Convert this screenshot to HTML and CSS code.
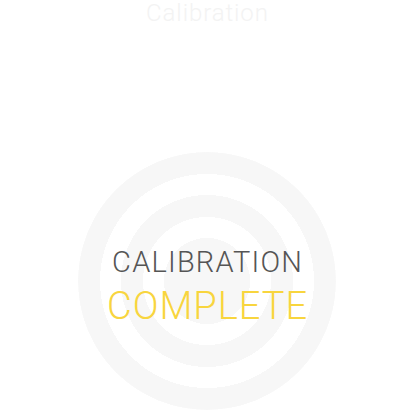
FILE: index.html
```html
<!DOCTYPE html>
<html>
<head>
<meta charset="utf-8">
<link rel="stylesheet" href="styles.css">
</head>
<body>
<div class="screen">
  <h1 class="title">Calibration</h1>
  <div class="target">
    <div class="status">
      <span class="line1">CALIBRATION</span>
      <span class="line2">COMPLETE</span>
    </div>
  </div>
</div>
</body>
</html>
```
FILE: styles.css
```css
html, body {
  margin: 0;
  padding: 0;
  background: #ffffff;
}
.screen {
  width: 414px;
  height: 419px;
  display: flex;
  flex-direction: column;
  align-items: center;
  font-family: Roboto, "Helvetica Neue", sans-serif;
  overflow: hidden;
}
.title {
  margin: 0;
  font-size: 24px;
  line-height: 26px;
  font-weight: 300;
  letter-spacing: 0.9px;
  padding-left: 0.9px;
  color: #f3f3f3;
}
.target {
  margin-top: 126px;
  width: 258px;
  height: 258px;
  border-radius: 50%;
  background: radial-gradient(circle closest-side,
    #f7f7f7 0 43px, #ffffff 43px 64px,
    #f7f7f7 64px 86px, #ffffff 86px 107px,
    #f7f7f7 107px 129px, transparent 129px);
  display: flex;
  align-items: center;
  justify-content: center;
}
.status {
  display: flex;
  flex-direction: column;
  align-items: center;
  font-weight: 300;
  padding-top: 14px;
}
.line1 {
  font-size: 29px;
  line-height: 36px;
  letter-spacing: 1.2px;
  padding-left: 1.2px;
  color: #555555;
}
.line2 {
  font-size: 38px;
  line-height: 52px;
  letter-spacing: 1px;
  padding-left: 1px;
  color: #f8d53e;
}
```
